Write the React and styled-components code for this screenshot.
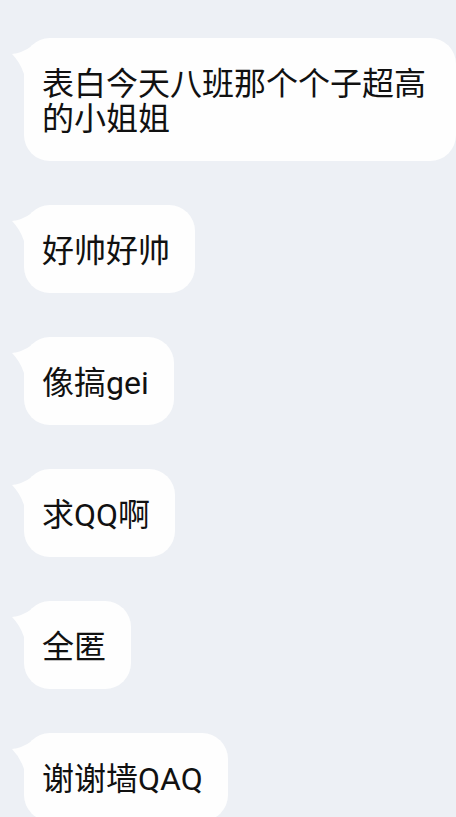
import React from "react";
import styled, { createGlobalStyle } from "styled-components";

const messages = [
  "表白今天八班那个个子超高的小姐姐",
  "好帅好帅",
  "像搞gei",
  "求QQ啊",
  "全匿",
  "谢谢墙QAQ",
];

const GlobalStyle = createGlobalStyle`
  html, body {
    margin: 0;
    padding: 0;
    height: 100%;
    overflow: hidden;
    background: #edf0f5;
  }
`;

const Feed = styled.div`
  display: flex;
  flex-direction: column;
  align-items: flex-start;
  gap: 44px;
  padding: 38px 0 0 24px;
  font-family: Roboto, "Noto Sans CJK SC", sans-serif;
`;

const Bubble = styled.div`
  position: relative;
  box-sizing: border-box;
  max-width: 462px;
  padding: 29px 25px 24px 18px;
  background: #fefefe;
  border-radius: 26px;
  color: #111;
  font-size: 32px;
  line-height: 35px;
  word-break: break-all;
`;

const Tail = styled.svg`
  position: absolute;
  left: -12px;
  top: 6px;
  width: 22px;
  height: 32px;
`;

function Message({ text }) {
  return (
    <Bubble>
      <Tail viewBox="0 0 22 32">
        <path d="M0 10 Q10 9 20 2 L22 2 L22 30 L12 30 Q8 18 0 10 Z" fill="#fefefe" />
      </Tail>
      {text}
    </Bubble>
  );
}

export default function App() {
  return (
    <>
      <GlobalStyle />
      <Feed>
        {messages.map((m) => (
          <Message key={m} text={m} />
        ))}
      </Feed>
    </>
  );
}
